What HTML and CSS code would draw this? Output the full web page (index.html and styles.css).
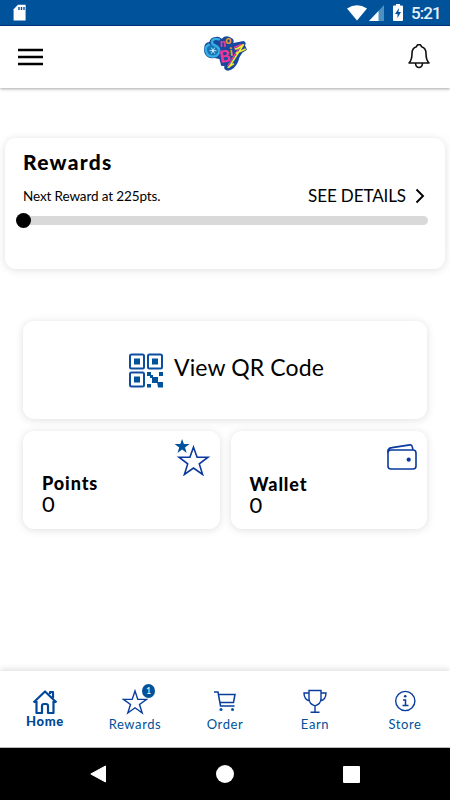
FILE: index.html
```html
<!DOCTYPE html>
<html lang="en">
<head>
<meta charset="utf-8">
<title>Sno Biz Rewards</title>
<link rel="stylesheet" href="styles.css">
</head>
<body>
<div class="status">
  <svg class="sd" width="14" height="18" viewBox="0 0 14 18"><path d="M5 .8h7.6v15.7H.6V5.3z" fill="#fff"/><path d="M6 3v3M8.500 3v3M11 3v3" stroke="#00529b" stroke-width="1.400"/></svg>
  <div class="status-right">
    <svg width="20" height="17" viewBox="0 0 20 17"><path d="M0 4.500Q10-2 20 4.500L10 16.500z" fill="#fff"/></svg>
    <svg class="signal" width="15" height="16" viewBox="0 0 15 16"><path d="M15 0v16H0z" fill="#4d91c0"/><path d="M9.500 6v10H0z" fill="#fff"/></svg>
    <svg class="battery" width="10" height="17" viewBox="0 0 10 17"><path d="M3 0h4v1.500h2q1 0 1 1V16q0 1-1 1H1q-1 0-1-1V2.500q0-1 1-1h2z" fill="#fff"/><path d="M6 4L2 10h2.500v4L8 8H5.500z" fill="#00529b"/></svg>
    <span class="time">5:21</span>
  </div>
</div>
<header class="header">
  <svg width="26" height="19" viewBox="0 0 26 19"><path d="M0 2h25M0 9h25M0 16h25" stroke="#000" stroke-width="2.500"/></svg>
  <svg class="logo" width="60" height="50" viewBox="0 0 180 150">
    <path d="M28 51Q29 38 43 36Q46 22 61 21Q72 18 80 26Q94 13 109 24Q119 28 115 39L145 33Q156 37 150 46L156 59L142 68Q132 80 129 96Q119 119 99 122Q85 121 88 107Q76 111 77 101L73 87Q65 86 58 84Q46 87 37 80Q24 70 28 51Z" fill="#17499f"/>
    <ellipse cx="54" cy="62" rx="21" ry="19" fill="#1476b8"/>
    <path d="M72 28Q55 23 51 34Q49 42 60 46Q76 53 72 69Q66 80 53 80Q36 79 33 63Q30 49 42 44" fill="none" stroke="#35aee0" stroke-width="7" stroke-linecap="round"/>
    <path d="M44 62h20M49 53l10 18M59 53L49 71" stroke="#e6f8ff" stroke-width="2.500"/>
    <g class="logo-type"><text x="74" y="50" font-size="32" fill="#ed3b9c">n</text><text x="91" y="43" font-size="32" fill="#f39b27">o</text><text transform="translate(76 99) rotate(-9)" font-size="50" fill="#ee369b">B</text><text transform="translate(106 78) rotate(-8)" font-size="35" fill="#f69a28">i</text></g>
    <path d="M117 52Q127 50 139 43L98 108" fill="none" stroke="#ed3b9c" stroke-width="4"/>
    <path d="M119 57Q131 56 146 43L101 113M123 70L152 57M98 113L117 101" fill="none" stroke="#f2e936" stroke-width="5"/>
  </svg>
  <svg width="22" height="26" viewBox="0 0 22 26"><path d="M1 19Q4 16 4 9.500Q4 4 8.500 2.800Q9.500 0 11 .9Q12.500 0 13.500 2.800Q18 4 18 9.500Q18 16 21 19ZM7.500 19.500Q8 23.500 11 23.500T14.500 19.500" fill="none" stroke="#111" stroke-width="1.600" stroke-linejoin="round"/></svg>
</header>
<main class="main">
  <section class="card rewards">
    <h1>Rewards</h1>
    <div class="reward-row"><span class="next">Next Reward at 225pts.</span><span class="details">SEE DETAILS</span>
      <svg width="10" height="16" viewBox="0 0 10 16"><path d="M1.500 1.500L8 8l-6.500 6.500" fill="none" stroke="#000" stroke-width="1.900"/></svg></div>
    <div class="track"><div class="thumb"></div></div>
  </section>
  <section class="card qr">
    <svg width="34" height="35" viewBox="0 0 34 35"><g fill="none" stroke="#0e4da0" stroke-width="2"><rect x="1" y="1.500" width="14" height="14" rx="1.500"/><rect x="19" y="1.500" width="14" height="14" rx="1.500"/><rect x="1" y="19.500" width="14" height="14" rx="1.500"/></g><path d="M5 5.500h6v6H5zM23 5.500h6v6h-6zM5 23.500h6v6H5zM18 19h4v4h-4zM30 19h4v4h-4zM23 24h6v6h-6zM21 22h3v3h-3zM28 29h6v5.500h-5zM18 31h4v3.500h-4z" fill="#00529b"/></svg>
    <span class="qr-label">View QR Code</span>
  </section>
  <div class="pair">
    <section class="card tile">
      <svg class="stars" width="36" height="38" viewBox="0 0 36 38"><path d="M8.100 1l1.800 5.100h5.700L11 9.400l1.700 5.500-4.600-3.300-4.600 3.300 1.700-5.500L.6 6.100h5.700z" fill="#00529b"/><path d="M19.500 9.200l3.600 10h10.900l-8.700 6.700 3.300 10.600-9.100-6.400-9.100 6.400 3.300-10.600L5 19.200h10.900z" fill="none" stroke="#0a399e" stroke-width="1.600"/></svg>
      <h2>Points</h2><div class="number">0</div>
    </section>
    <section class="card tile wallet">
      <svg width="30" height="27" viewBox="0 0 30 27"><path d="M1 9v13q0 3 3 3h22q3 0 3-3V9q0-3-3-3H4Q1 6 1 9Q0 4 5 3.600L23 .9q2-.2 2.300 2L26 6" fill="none" stroke="#0a399e" stroke-width="1.600"/><circle cx="21.700" cy="15.700" r="2.100" fill="#0a399e"/></svg>
      <h2>Wallet</h2><div class="number">0</div>
    </section>
  </div>
</main>
<nav class="nav">
  <div class="item active"><svg width="26" height="26" viewBox="0 0 26 26"><path d="M1.500 13.500L13 2.500l11.500 11M4.500 12v12h5.500v-7q0-2 2-2h2q2 0 2 2v7h5.500V12M18 5V3h3v6" fill="none" stroke="#00489a" stroke-width="2.200" stroke-linejoin="round"/></svg><span class="label">Home</span></div>
  <div class="item"><svg width="26" height="26" viewBox="0 0 26 26"><path d="M13 2l2.800 8.400h8.800l-7.100 5.100 2.700 8.500-7.200-5.200L5.800 24l2.700-8.500-7.100-5.100h8.800z" fill="none" stroke="#083d9c" stroke-width="1.400"/></svg><span class="badge">1</span><span class="label">Rewards</span></div>
  <div class="item"><svg width="26" height="26" viewBox="0 0 26 26"><path d="M2 3h4l2.500 14h14M6.500 5.500h16.500l-1.500 8H8M8.500 17h13" fill="none" stroke="#083d9c" stroke-width="1.500"/><circle cx="9" cy="20.500" r="1.500" fill="#00529b"/><circle cx="20.500" cy="20.500" r="1.500" fill="#00529b"/></svg><span class="label">Order</span></div>
  <div class="item"><svg width="26" height="26" viewBox="0 0 26 26"><path d="M7 1.500h12v8q0 5.500-6 7.300Q7 15 7 9.500zM7 4H2q0 7 6 8M19 4h5q0 7-6 8M13 17v6M8.500 23.300h9" fill="none" stroke="#083d9c" stroke-width="1.400"/></svg><span class="label">Earn</span></div>
  <div class="item"><svg width="26" height="26" viewBox="0 0 26 26"><circle cx="13.300" cy="12" r="9.600" fill="none" stroke="#083d9c" stroke-width="1.400"/><circle cx="13.200" cy="7.300" r="1.300" fill="#083d9c"/><path d="M11 11h2.500v5.500M10.500 16.500h6" fill="none" stroke="#083d9c" stroke-width="1.500"/></svg><span class="label">Store</span></div>
</nav>
<footer class="system">
  <svg width="16" height="20" viewBox="0 0 16 20"><path d="M15.500 2v16L.8 10z" fill="#fff" stroke="#fff" stroke-linejoin="round"/></svg>
  <div class="circle"></div><div class="square"></div>
</footer>
</body>
</html>
```
FILE: styles.css
```css
* { box-sizing: border-box; }
body { margin: 0; width: 450px; height: 800px; display: flex; flex-direction: column; overflow: hidden; background: #fff; color: #000; font-family: Lato, sans-serif; }
svg { display: block; flex: none; }
.status { height: 26px; background: #00529b; border-bottom: 1px solid #003585; display: flex; justify-content: space-between; padding: 4px 9px 0 13px; }
.status-right { display: flex; }
.signal { margin: 1px 0 0 2px; }
.battery { margin-left: 9px; }
.time { font: 500 17px/19px Roboto, sans-serif; color: #e4f0fb; margin-left: 8px; width: 30px; white-space: nowrap; letter-spacing: -.9px; }
.header { height: 62px; display: grid; grid-template-columns: 1fr 60px 1fr; padding: 0 19px 0 18px; align-items: center; background: #fff; box-shadow: 0 1px 3px rgba(0,0,0,.35); }
.header > :last-child { justify-self: end; margin-right: 1px; }
.logo { margin: -4px 0 0; }
.logo-type { font-family: Lato, sans-serif; font-weight: 900; }
.main { flex: 1; padding: 50px 5px 0; }
.card { background: #fff; border-radius: 11px; box-shadow: 0 1px 9px rgba(0,0,0,.13); }
.rewards { height: 131px; padding: 10px 17px 0 18px; }
h1, h2 { margin: 0; }
h1 { font-size: 21px; font-weight: 900; line-height: 27px; letter-spacing: 1.3px; }
.reward-row { display: flex; align-items: center; height: 24px; margin-top: 8px; }
.next { font-size: 13.500px; letter-spacing: -.12px; white-space: nowrap; padding-top: 1px; }
.details { font-size: 17px; letter-spacing: -.1px; white-space: nowrap; margin-left: auto; margin-right: 9px; }
.reward-row svg { margin-top: 2px; margin-right: 3px; }
.track { height: 9px; border-radius: 5px; background: #d9d9d9; margin-top: 9px; }
.thumb { width: 15px; height: 15px; border-radius: 50%; background: #000; position: relative; top: -3px; left: -7px; }
.qr { height: 98px; margin: 51.500px 18px 0; display: flex; align-items: center; justify-content: center; gap: 11px; padding: 1px 0 0 3px; }
.qr-label { font-size: 23px; letter-spacing: .13px; line-height: 28px; margin-top: -6px; white-space: nowrap; }
.pair { display: grid; grid-template-columns: 1fr 1fr; gap: 11px; margin: 12.500px 18px 0; }
.tile { height: 98px; padding: 41px 0 0 19px; position: relative; }
.tile svg { position: absolute; right: 10px; top: 13px; }
.tile .stars { top: 7px; right: 10px; }
h2 { font-size: 18px; font-weight: 900; line-height: 22px; letter-spacing: .9px; }
.number { font-size: 22px; line-height: 19px; }
.wallet { padding-top: 42px; }
.nav { height: 77px; display: grid; grid-template-columns: repeat(5, 90px); border-bottom: 1px solid #bbb; box-shadow: 0 -2px 6px rgba(0,0,0,.12); padding-top: 18px; color: #00529b; }
.item { position: relative; display: flex; flex-direction: column; align-items: center; }
.label { font-size: 13px; line-height: 18px; letter-spacing: .6px; }
.active .label { font-weight: 900; margin-top: -3px; letter-spacing: .7px; color: #00489a; }
.badge { position: absolute; left: 52px; top: -5px; width: 13px; height: 14px; border-radius: 50%; background: #00529b; color: #fff; font-size: 9px; line-height: 14px; text-align: center; }
.system { height: 52px; background: #000; display: flex; align-items: center; padding-left: 90px; }
.circle { width: 18px; height: 18px; border-radius: 50%; background: #fff; margin-left: 110px; }
.square { width: 17px; height: 17px; border-radius: 1px; background: #fff; margin-left: 109px; }
```
